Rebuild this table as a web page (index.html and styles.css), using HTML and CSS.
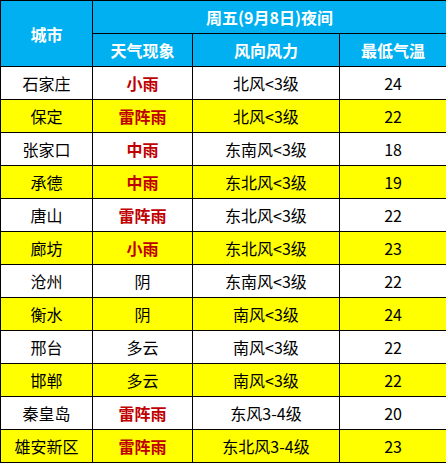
FILE: index.html
```html
<!DOCTYPE html>
<html lang="zh">
<head>
<meta charset="utf-8">
<link rel="stylesheet" href="styles.css">
</head>
<body>
<table class="wx">
  <colgroup>
    <col class="c1"><col class="c2"><col class="c3"><col class="c4">
  </colgroup>
  <thead>
    <tr>
      <th rowspan="2">城市</th>
      <th colspan="3">周五(9月8日)夜间</th>
    </tr>
    <tr>
      <th>天气现象</th>
      <th>风向风力</th>
      <th>最低气温</th>
    </tr>
  </thead>
  <tbody>
    <tr><td>石家庄</td><td class="rain">小雨</td><td>北风&lt;3级</td><td>24</td></tr>
    <tr class="y"><td>保定</td><td class="rain">雷阵雨</td><td>北风&lt;3级</td><td>22</td></tr>
    <tr><td>张家口</td><td class="rain">中雨</td><td>东南风&lt;3级</td><td>18</td></tr>
    <tr class="y"><td>承德</td><td class="rain">中雨</td><td>东北风&lt;3级</td><td>19</td></tr>
    <tr><td>唐山</td><td class="rain">雷阵雨</td><td>东北风&lt;3级</td><td>22</td></tr>
    <tr class="y"><td>廊坊</td><td class="rain">小雨</td><td>东北风&lt;3级</td><td>23</td></tr>
    <tr><td>沧州</td><td>阴</td><td>东南风&lt;3级</td><td>22</td></tr>
    <tr class="y"><td>衡水</td><td>阴</td><td>南风&lt;3级</td><td>24</td></tr>
    <tr><td>邢台</td><td>多云</td><td>南风&lt;3级</td><td>22</td></tr>
    <tr class="y"><td>邯郸</td><td>多云</td><td>南风&lt;3级</td><td>22</td></tr>
    <tr><td>秦皇岛</td><td class="rain">雷阵雨</td><td>东风3-4级</td><td>20</td></tr>
    <tr class="y"><td>雄安新区</td><td class="rain">雷阵雨</td><td>东北风3-4级</td><td>23</td></tr>
  </tbody>
</table>
</body>
</html>
```
FILE: styles.css
```css
html, body {
  margin: 0;
  padding: 0;
  background: #ffffff;
}
.wx {
  border-collapse: collapse;
  table-layout: fixed;
  width: 446px;
  font-family: "Noto Sans CJK SC", "DejaVu Sans", sans-serif;
  font-size: 16px;
  color: #000000;
}
.c1 { width: 92px; }
.c2 { width: 100px; }
.c3 { width: 147px; }
.c4 { width: 107px; }
.wx th, .wx td {
  border: 1px solid #000000;
  height: 33px;
  padding: 0;
  text-align: center;
  vertical-align: middle;
  line-height: 20px;
  box-sizing: border-box;
}
.wx th {
  background: #00b0f0;
  color: #ffffff;
  font-weight: bold;
}
.wx td {
  background: #ffffff;
  font-weight: normal;
}
.wx tr.y td {
  background: #ffff00;
}
.wx td.rain {
  color: #c00000;
  font-weight: bold;
}
```
